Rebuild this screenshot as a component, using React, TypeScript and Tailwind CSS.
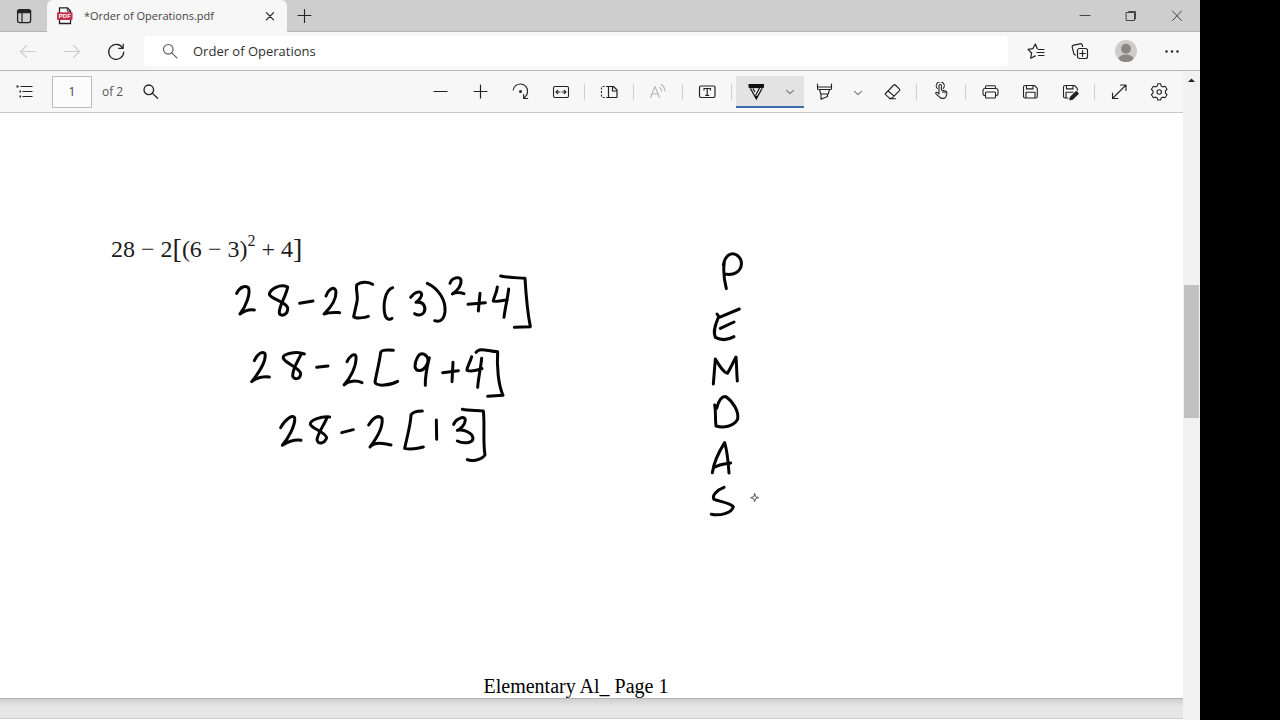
import type { ReactNode } from 'react';

type IconProps = { children: ReactNode; className?: string };

function Icon({ children, className = 'text-[#222222]' }: IconProps) {
  return (
    <svg
      viewBox="0 0 20 20"
      className={`size-5 shrink-0 ${className}`}
      fill="none"
      stroke="currentColor"
      strokeWidth="1.1"
      strokeLinecap="round"
      strokeLinejoin="round"
      aria-hidden="true"
    >
      {children}
    </svg>
  );
}

function IconButton({
  label,
  width = 'w-10',
  className,
  children,
  disabled,
}: {
  label: string;
  width?: string;
  className?: string;
  children: ReactNode;
  disabled?: boolean;
}) {
  return (
    <button
      type="button"
      aria-label={label}
      disabled={disabled}
      className={`flex h-8 shrink-0 items-center justify-center ${width}`}
    >
      <Icon className={className}>{children}</Icon>
    </button>
  );
}

function Separator() {
  return (
    <div className="flex w-[9px] shrink-0 justify-center">
      <div className="h-4 w-px bg-[#cfcfcf]" />
    </div>
  );
}

const searchGlyph = (
  <>
    <circle cx="8.3" cy="8.3" r="4.8" />
    <path d="M11.8 11.8l5 5" />
  </>
);

const chevron = <path d="M6.5 9.3l3.5 3.4 3.500-3.400" />;

function TabStrip() {
  return (
    <header className="flex h-8 border-b border-[#b4b4b4] bg-[#cecece]">
      <IconButton label="Tab actions menu" width="w-[47px]">
        <rect x="3.6" y="3.6" width="13" height="13" rx="2" strokeWidth="1.3" />
        <path d="M3.6 5.5h13M8 7v9.5" strokeWidth="1.2" />
        <path d="M4 4.5h12.5v2.3H4z" fill="currentColor" />
      </IconButton>
      <div className="-mb-px flex h-8 w-60 items-center rounded-t-md bg-[#f7f7f7]">
        <svg viewBox="0 0 18 18" className="ml-[9px] size-[18px] shrink-0" aria-hidden="true">
          <path d="M3.5 .9h8l3 3v12.6h-11z" fill="#fff" stroke="#222" strokeWidth="1.3" />
          <path d="M11.3 1v3.2h3.2" fill="none" stroke="#222" />
          <rect x="1" y="5.2" width="15.5" height="7.8" rx="1" fill="#c42f49" />
          <text x="8.8" y="11.3" fontSize="6" fontWeight="700" textAnchor="middle" fill="#fff" fontFamily="Liberation Sans, sans-serif">
            PDF
          </text>
        </svg>
        <span className="ml-2.5 flex-1 whitespace-nowrap text-[11px] text-[#444444]">*Order of Operations.pdf</span>
        <button type="button" aria-label="Close tab" className="mr-[7px] flex size-5 items-center justify-center">
          <Icon>
            <path d="M6.4 6.6l7.2 7.2M13.6 6.6l-7.2 7.2" strokeWidth="1.2" />
          </Icon>
        </button>
      </div>
      <IconButton label="New tab" width="w-9">
        <path d="M9.5 3.5v13M3 9.500h13" strokeWidth="1.100" />
      </IconButton>
      <div className="ml-auto flex">
        <IconButton label="Minimize" width="w-[46px]" className="text-[#444444]">
          <path d="M5 9.5h10" strokeWidth="1" />
        </IconButton>
        <IconButton label="Restore" width="w-[46px]" className="text-[#444444]">
          <path d="M5.5 6.500h8v8H5.500zM7.500 6V5.500h7v7.500h-.5" strokeWidth="1" />
        </IconButton>
        <IconButton label="Close" width="w-[46px]" className="text-[#444444]">
          <path d="M5.500 5l9 9.500M14.500 5l-9 9.500" strokeWidth="1" />
        </IconButton>
      </div>
    </header>
  );
}

function AddressBar() {
  return (
    <nav className="flex h-[39px] items-center border-b border-[#b8b8b8] bg-[#f7f7f7] px-1.5">
      <IconButton label="Back" width="w-11" className="text-[#cccccc]" disabled>
        <path d="M17.5 10.500h-15M8.500 4.500l-6 6 6 6" />
      </IconButton>
      <IconButton label="Forward" width="w-11" className="text-[#cccccc]" disabled>
        <path d="M2.5 10.500h15M11.500 4.500l6 6-6 6" />
      </IconButton>
      <IconButton label="Refresh" width="w-11">
        <path d="M16.6 7A7.500 7.500 0 1 0 17.700 11M17.200 3v4.300h-4.400" strokeWidth="1.2" />
      </IconButton>
      <label className="mx-1.5 flex h-[30px] min-w-0 flex-1 items-center rounded bg-white pl-4">
        <Icon className="text-[#555555]">{searchGlyph}</Icon>
        <input
          aria-label="Address"
          defaultValue="Order of Operations"
          className="ml-[13px] min-w-0 flex-1 bg-transparent pt-px text-[13px] text-[#2f2f2f] outline-none"
        />
      </label>
      <IconButton label="Favorites" width="w-11">
        <path d="M11.300 7.800L9.300 3 7 7.600l-5 .8 3.600 3.600-.9 5.200 4.600-2.300M12.500 8.500h5.500M11 11.500h7M12.500 14.500h5.500" strokeWidth="1.2" />
      </IconButton>
      <IconButton label="Collections" width="w-11">
        <rect x="7.500" y="7.500" width="10" height="10" rx="2" strokeWidth="1.2" />
        <path d="M12.500 9.700v5.600M9.700 12.500h5.600M5.500 14L4 13.200 2.300 6.700c-.3-1.300.3-2.200 1.500-2.500l6-1.400c1.300-.3 2.200.3 2.500 1.400l.3 1.300" strokeWidth="1.2" />
      </IconButton>
      <button type="button" aria-label="Profile" className="flex h-8 w-12 shrink-0 items-center justify-center">
        <svg viewBox="0 0 22 22" className="size-[22px]" aria-hidden="true">
          <circle cx="11" cy="11" r="11" fill="#cfcdcb" />
          <circle cx="11" cy="8.700" r="5" fill="#8a8886" />
          <ellipse cx="11" cy="18.300" rx="7.3" ry="3.7" fill="#8a8886" />
        </svg>
      </button>
      <IconButton label="Settings and more" width="w-11">
        <g fill="currentColor" stroke="none">
          <circle cx="4.500" cy="10.500" r="1.200" />
          <circle cx="10" cy="10.500" r="1.200" />
          <circle cx="15.500" cy="10.500" r="1.200" />
        </g>
      </IconButton>
    </nav>
  );
}

function PdfToolbar() {
  return (
    <div role="toolbar" aria-label="PDF tools" className="flex h-[42px] items-center border-b border-[#c8c8c8] bg-[#f7f7f7]">
      <IconButton label="Contents" width="w-12">
        <path d="M6.500 4.500h12M8.500 9.500h10M8.500 14.500h10" strokeLinecap="butt" />
        <path d="M2.500 4.500h2M5.500 9.500h1.500M5.500 14.500h1.500" strokeWidth="2" strokeLinecap="butt" />
      </IconButton>
      <label className="ml-1 flex items-center">
        <input
          aria-label="Page number"
          defaultValue="1"
          className="h-8 w-10 border border-[#bcbcbc] bg-[#fbfbfb] text-center text-[12px] text-[#444444] outline-none"
        />
        <span className="ml-2.5 whitespace-nowrap text-[12px] text-[#555555]">of 2</span>
      </label>
      <IconButton label="Find" width="w-14">
        <circle cx="7.800" cy="7.800" r="4.800" strokeWidth="1.300" />
        <path d="M11.500 11.400l5 4.800" strokeWidth="1.300" />
      </IconButton>
      <div className="ml-auto flex items-center pr-1">
        <IconButton label="Zoom out">
          <path d="M4 9.500h13" strokeWidth="1.200" />
        </IconButton>
        <IconButton label="Zoom in">
          <path d="M10.500 3v13M4 9.500h13" strokeWidth="1.200" />
        </IconButton>
        <IconButton label="Rotate">
          <path d="M3.200 8a7.200 7.200 0 0 1 14.300 1.500c0 3-1.500 5-3.800 6.500M13.600 12.500v4h4.100" strokeWidth="1.100" />
          <circle cx="10.500" cy="9.500" r="1.500" fill="currentColor" stroke="none" />
        </IconButton>
        <IconButton label="Fit to width">
          <rect x="3.500" y="4.500" width="15" height="11" rx="1.500" strokeWidth="1.100" />
          <path d="M6 10h4M12 10h4M7.700 8.300L6 10l1.700 1.700M14.300 8.300L16 10l-1.700 1.700" />
        </IconButton>
        <Separator />
        <IconButton label="Page view">
          <path d="M9 4.500H3.500C3 4.500 2.500 5 2.500 5.500v9c0 .6.400 1 1 1H9" strokeDasharray="2 1.500" strokeLinecap="butt" />
          <path d="M9.500 4.500h5l3.500 3.500v7c0 .3-.2.500-.5.500h-8zM13.500 4.700V9h4.300" strokeWidth="1.200" />
        </IconButton>
        <Separator />
        <IconButton label="Read aloud" className="text-[#b5b5b5]" disabled>
          <path d="M2.500 15.500L7 4.500l4.500 11M4 12h6M11.500 5.500c1.300.8 2 2 2 3.500M13 2.500c2.500 1.500 4 3.500 4 6.500" />
        </IconButton>
        <Separator />
        <IconButton label="Add text">
          <rect x="2.500" y="4" width="15.500" height="11.500" rx="1.500" strokeWidth="1.200" />
          <path d="M7 8V6.500h6.500V8M10.200 6.700v6.500M8.700 13.300h3" strokeWidth="1.200" />
        </IconButton>
        <Separator />
        <div className="flex h-8 w-17 items-center border-b-2 border-[#3b6ea8] bg-[#e3e3e3]">
          <button type="button" aria-label="Draw" aria-pressed="true" className="flex w-10 justify-center">
            <svg viewBox="0 0 20 20" className="size-5 shrink-0" aria-hidden="true">
              <path d="M2.500 3h15.500v3.200l-1 1.100H3.600L2.500 6.200z" fill="#111" />
              <path d="M4.500 7.500L10.300 18 16 7.500" fill="#f0f0f0" stroke="#111" strokeWidth="1.300" />
              <path d="M8.500 14.800h3.500L10.300 18z" fill="#111" />
              <path d="M9.500 14.500L13.500 7M7 7.500l2 3.500" fill="none" stroke="#111" strokeWidth="1.200" />
            </svg>
          </button>
          <button type="button" aria-label="Pen options" className="flex w-7 justify-center">
            <Icon className="text-[#777777]">{chevron}</Icon>
          </button>
        </div>
        <IconButton label="Highlight">
          <path d="M3.500 2v4.500c0 .7.300 1 1 1h12c.7 0 1-.3 1-1V2M3.700 5h13.600M5.500 7.500l1.300 4.500h7.400l1.300-4.500M7 12v5.200l6.500-2.700V12" />
        </IconButton>
        <IconButton label="Highlighter options" width="w-7" className="text-[#777777]">
          {chevron}
        </IconButton>
        <IconButton label="Erase">
          <path d="M3.500 11.500l8.300-8.500c.5-.5 1-.5 1.500 0l4.200 4.200c.5.5.5 1 0 1.500L10 16.200H7.500L3.500 12.700c-.4-.4-.4-.8 0-1.200zM6 9l6.200 5.200M7.500 16.700h6" />
        </IconButton>
        <Separator />
        <IconButton label="Touch drawing">
          <path d="M8 11V3.800c0-1.700 2.400-1.700 2.400 0V8l4 1c1.200.3 1.700 1 1.500 2.200l-.7 3c-.4 1.500-1.200 2.200-2.700 2.200H11c-1 0-1.700-.4-2.300-1.300L5 11.800c-.8-1.200.5-2 1.500-1.200L8 11.800M12 8.500v2M14 9v2M6.300 6.500a4 4 0 1 1 5.900 0" />
        </IconButton>
        <Separator />
        <IconButton label="Print">
          <path d="M5.500 6.500V5c0-.8.400-1.200 1.200-1.200h7.600c.8 0 1.200.4 1.200 1.200v1.500M5.500 13.500h-1c-1 0-1.500-.5-1.500-1.500V8.500c0-1.300.7-2 2-2h11c1.300 0 2 .7 2 2V12c0 1-.5 1.500-1.500 1.500h-1M6.500 10h8c.6 0 1 .4 1 1v4c0 .7-.3 1-1 1h-8c-.7 0-1-.3-1-1v-4c0-.6.4-1 1-1z" />
        </IconButton>
        <IconButton label="Save">
          <path d="M5 3.500h9.500l2.800 2.800v8.200c0 1-.5 1.500-1.500 1.500H5c-1 0-1.500-.5-1.500-1.500V5c0-1 .5-1.500 1.500-1.500zM6.500 3.700v3.200h6.500V3.700M6 15.700v-5.500h9v5.500" />
        </IconButton>
        <IconButton label="Save as">
          <path d="M8 16H5c-1 0-1.500-.5-1.500-1.500V5c0-1 .5-1.500 1.500-1.500h9.500l2.800 2.800v1.900M6.500 3.700v3.200h6.500V3.700M6 15.700v-5.500h7" />
          <path d="M10.700 15.500l5.600-5.500 1.500 1.500-5.600 5.500-2 .5z" fill="currentColor" strokeWidth="1.800" />
        </IconButton>
        <Separator />
        <IconButton label="Full screen">
          <path d="M3.500 16.500L17 3M11.500 3H17v5.500M3.500 11v5.500H9" strokeWidth="1.100" />
        </IconButton>
        <IconButton label="Settings">
          <path
            d="M8.800 1.800h2.800l.6 2.200 1.500.9 2.300-.6 2 3-1.600 1.700v2l1.600 1.700-2 3-2.300-.6-1.500.9-.6 2H8.800l-.6-2-1.500-.9-2.300.6-2-3L4 11V9L2.400 7.300l2-3 2.300.6 1.500-.9z"
            strokeWidth="1.100"
          />
          <circle cx="10.200" cy="10" r="2.200" strokeWidth="1.100" />
        </IconButton>
      </div>
    </div>
  );
}

function InkLayer() {
  return (
    <svg
      viewBox="0 0 1183 585"
      className="pointer-events-none absolute top-0 left-0 h-[585px] w-[1183px]"
      role="img"
      aria-label="Ink: 28-2[(3)²+4], 28-2[9+4], 28-2[13]; P E M D A S"
      fill="none"
      stroke="#050505"
      strokeWidth="9"
      strokeLinecap="round"
      strokeLinejoin="round"
    >
      <g transform="translate(225 152) scale(.33333)">
        <path d="M35 85C45 65 62 60 70 68C78 85 62 125 45 147C60 136 75 132 88 135" />
        <path d="M188 66C165 55 135 72 133 88C135 102 180 108 188 128C190 150 168 156 163 145C160 125 185 90 188 66" />
        <path d="M224 115L264 108" />
        <path d="M303 93C312 70 330 62 333 80C334 105 315 130 297 147C315 140 330 142 344 143" />
        <path d="M443 58C430 48 405 50 395 60C392 75 400 95 396 110L386 155C392 162 420 158 430 154" />
        <path d="M88 287C95 270 112 255 120 266C125 290 100 325 80 350C95 338 115 333 133 336" />
        <path d="M238 267C215 258 170 265 175 280C180 295 220 305 227 325C226 345 205 345 203 332C203 310 218 290 228 268" />
        <path d="M275 307L309 303" />
        <path d="M366 290C375 272 390 262 393 275C395 305 375 340 357 360C370 347 395 345 411 353" />
        <path d="M167 488C180 462 203 448 209 458C212 480 190 520 172 541C190 530 210 523 228 526" />
        <path d="M314 456C290 453 255 465 256 478C262 492 300 500 305 518C300 536 278 540 276 524C278 505 297 480 305 460" />
        <path d="M350 503L385 494" />
      </g>
      <g transform="translate(370 152) scale(.33333)">
        <path d="M68 68C45 75 38 120 45 150C50 165 60 165 66 160" />
        <path d="M122 97C135 80 152 75 155 88C155 100 143 108 138 112C160 108 168 125 163 140C155 155 140 150 134 146" />
        <path d="M172 55C205 70 228 105 225 140C222 165 210 172 194 167" />
        <path d="M240 55C245 38 270 32 273 45C275 62 260 78 247 87C258 80 270 82 282 86" />
        <path d="M294 118L346 113M330 85L325 138" />
        <path d="M382 66C380 85 370 100 370 108C382 112 400 106 412 104M416 72C413 100 405 130 402 157" />
        <path d="M392 33C415 38 440 38 465 40C468 90 472 140 481 185L433 187" />
        <path d="M70 256C50 254 35 256 32 262C28 295 18 330 15 352C20 365 60 362 83 349" />
        <path d="M163 268C145 258 135 290 135 305C138 322 160 320 170 300C178 285 175 275 163 268M178 278C170 310 165 335 166 361" />
        <path d="M218 323L265 317M249 292L246 350" />
        <path d="M305 275C300 295 290 305 291 316C305 320 325 315 336 311M335 280C332 310 325 340 323 367" />
        <path d="M318 262C330 245 355 260 383 260C380 305 385 360 399 391L353 394" />
        <path d="M-4 480C10 458 25 448 36 460C40 485 20 520 0 546C15 530 40 535 63 540" />
        <path d="M157 438C140 438 128 440 123 450C122 480 110 520 104 550C120 554 145 550 160 546" />
        <path d="M199 465L200 523" />
        <path d="M251 478C258 460 285 450 286 465C285 480 272 492 262 496C285 492 308 505 309 520C308 535 280 537 262 528" />
        <path d="M277 433C300 438 325 435 340 438C345 480 338 530 345 570C335 585 305 590 292 584" />
      </g>
      <g transform="translate(690 127) scale(.33333)">
        <path d="M103 67C100 85 100 110 109 146M100 75C105 45 125 35 140 45C160 58 158 85 140 97C128 104 115 104 105 102" />
        <path d="M81 222L88 232L148 207M84 235C75 255 70 280 76 292C95 302 115 300 132 290M91 265L132 246" />
        <path d="M70 432C72 405 74 380 76 357C90 380 100 397 112 400C122 385 130 365 138 351C140 375 140 400 142 423" />
      </g>
      <g transform="translate(690 267) scale(.33333)">
        <path d="M74 75C78 95 75 115 78 138M80 85C85 65 95 48 108 50C130 65 147 95 143 118C130 140 100 145 78 138" />
        <path d="M67 278C72 245 90 210 104 188C112 215 115 250 117 279M74 262C90 252 105 252 122 249" />
        <path d="M102 322C80 330 65 348 72 358C90 365 120 368 130 380C125 400 90 408 64 403" />
        <path d="M194 341L197 350L206 353L197 356L194 365L191 356L182 353L191 350Z" stroke="#555" strokeWidth="3" />
      </g>
    </svg>
  );
}

function DocumentView() {
  return (
    <main className="flex min-h-0 flex-1 flex-col overflow-hidden bg-[#e2e2e2]">
      <section className="relative flex flex-1 flex-col bg-white pt-[118px] font-['Liberation_Serif',serif] text-black">
        <p className="ml-[111px] flex h-9 items-center gap-1.5 text-[24px] text-[#1c1c1c]">
          <span>28</span>
          <span>−</span>
          <span className="flex items-center">
            2<span className="text-[28px]">[</span>(6
          </span>
          <span>−</span>
          <span className="flex items-center">
            3)<sup className="text-[16px]">2</sup>
          </span>
          <span>+</span>
          <span className="flex items-center">
            4<span className="text-[28px]">]</span>
          </span>
        </p>
        <InkLayer />
        <footer className="mt-auto pr-[31px] text-center text-[20px] leading-6">Elementary Al_ Page 1</footer>
      </section>
      <div className="h-[21px] shrink-0 border-t border-b border-t-[#b5b5b5] border-b-[#cccccc] bg-linear-to-b from-[#cfcfcf] to-[#e6e6e6] to-40%" />
      <div className="h-px shrink-0 bg-white" />
    </main>
  );
}

function ScrollBar() {
  return (
    <div className="flex w-[17px] shrink-0 flex-col items-center bg-[#f1f1f1]" aria-hidden="true">
      <svg viewBox="0 0 17 17" className="size-[17px]">
        <path d="M5 11L8.500 7.500L12 11Z" fill="#222" />
      </svg>
      <div className="flex w-full flex-1 flex-col px-px">
        <div className="flex-[197]" />
        <div className="flex-[133] bg-[#c1c1c1]" />
        <div className="flex-[302]" />
      </div>
    </div>
  );
}

export default function App() {
  return (
    <div className="flex h-screen bg-black font-['Open_Sans','Noto_Sans',sans-serif]">
      <div className="flex min-w-0 flex-1 flex-col">
        <TabStrip />
        <AddressBar />
        <div className="flex min-h-0 flex-1">
          <div className="flex min-w-0 flex-1 flex-col">
            <PdfToolbar />
            <DocumentView />
          </div>
          <ScrollBar />
        </div>
      </div>
      <div className="w-20 shrink-0 bg-black" />
    </div>
  );
}
